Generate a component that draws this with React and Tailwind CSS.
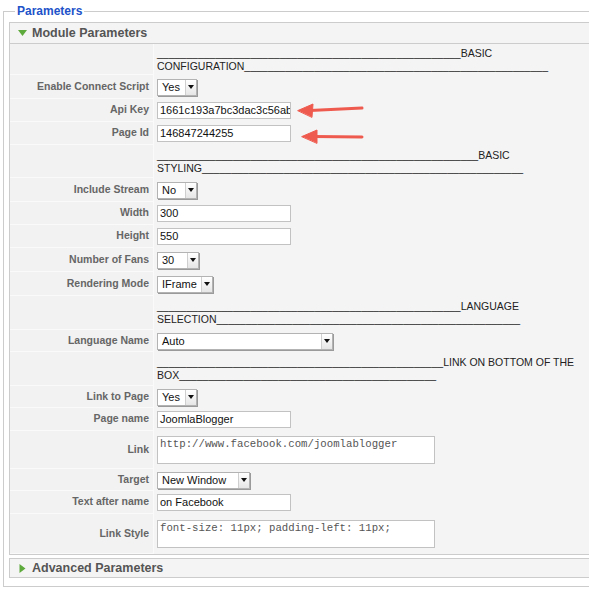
import React from 'react';

const FONT = { fontFamily: '"Liberation Sans", Arial, sans-serif' };

function Select({ value, className }) {
  return (
    <div
      className={`flex h-[17px] items-center border border-[#b3b3b3] bg-white shadow-[1px_1px_0_#9a9a9a] ${className}`}
    >
      <span className="flex-1 pl-[4px] text-[11px] leading-none text-[#111]">{value}</span>
      <span className="flex h-full w-[11px] items-center justify-center border-l border-[#cfcfcf] bg-gradient-to-b from-white to-[#e6e6e6]">
        <svg width="6" height="4" viewBox="0 0 6 4" aria-hidden>
          <path d="M0 0H6L3 4Z" fill="#111" />
        </svg>
      </span>
    </div>
  );
}

function TextInput({ value }) {
  return (
    <div className="flex h-[17px] w-[134px] items-center overflow-hidden whitespace-nowrap border border-[#c2c2c2] bg-white pl-[2px] text-[11px] leading-none text-[#111]">
      {value}
    </div>
  );
}

function TextArea({ value }) {
  return (
    <div
      className="h-[28px] w-[278px] border border-[#c2c2c2] bg-white px-[2px] pt-[1px] text-[10.7px] leading-[13px] text-[#555]"
      style={{ fontFamily: '"Liberation Mono", "Courier New", monospace' }}
    >
      {value}
    </div>
  );
}

// Joomla "spacer" params: a long run of underscores around the section title
function Spacer({ lead, word, second, trail }) {
  return (
    <div className="text-[10.5px] leading-[13px] text-[#222]">
      <div className="whitespace-nowrap">
        {'_'.repeat(lead)}
        {word}
      </div>
      <div className="whitespace-nowrap">
        {second}
        {'_'.repeat(trail)}
      </div>
    </div>
  );
}

const rows = [
  { h: 'h-[31px]', field: <Spacer lead={52} word="BASIC" second="CONFIGURATION" trail={52} /> },
  { h: 'h-[24px]', label: 'Enable Connect Script', field: <Select value="Yes" className="w-[40px]" /> },
  { h: 'h-[23px]', label: 'Api Key', field: <TextInput value="1661c193a7bc3dac3c56ab" /> },
  { h: 'h-[23px]', label: 'Page Id', field: <TextInput value="146847244255" /> },
  { h: 'h-[33px]', field: <Spacer lead={55} word="BASIC" second="STYLING" trail={55} /> },
  { h: 'h-[24px]', label: 'Include Stream', field: <Select value="No" className="w-[40px]" /> },
  { h: 'h-[23px]', label: 'Width', field: <TextInput value="300" /> },
  { h: 'h-[23px]', label: 'Height', field: <TextInput value="550" /> },
  { h: 'h-[24px]', label: 'Number of Fans', field: <Select value="30" className="w-[42px]" /> },
  { h: 'h-[24px]', label: 'Rendering Mode', field: <Select value="IFrame" className="w-[56px]" /> },
  { h: 'h-[34px]', field: <Spacer lead={52} word="LANGUAGE" second="SELECTION" trail={52} /> },
  { h: 'h-[22px]', label: 'Language Name', field: <Select value="Auto" className="w-[176px]" /> },
  { h: 'h-[34px]', field: <Spacer lead={49} word="LINK ON BOTTOM OF THE" second="BOX" trail={44} /> },
  { h: 'h-[22px]', label: 'Link to Page', field: <Select value="Yes" className="w-[40px]" /> },
  { h: 'h-[23px]', label: 'Page name', field: <TextInput value="JoomlaBlogger" /> },
  { h: 'h-[38px]', label: 'Link', field: <TextArea value="http://www.facebook.com/joomlablogger" /> },
  { h: 'h-[22px]', label: 'Target', field: <Select value="New Window" className="w-[93px]" /> },
  { h: 'h-[23px]', label: 'Text after name', field: <TextInput value="on Facebook" /> },
  { h: 'h-[40px]', label: 'Link Style', field: <TextArea value="font-size: 11px; padding-left: 11px;" /> },
];

function PaneTitle({ open, children }) {
  return (
    <div className="flex items-center gap-[5px] pl-[8px] text-[12.5px] font-bold text-[#555]">
      {open ? (
        <svg width="9" height="6" viewBox="0 0 9 6" aria-hidden>
          <path d="M0 0H9L4.5 6Z" fill="#5faa3c" />
        </svg>
      ) : (
        <svg width="9" height="9" viewBox="0 0 9 9" aria-hidden>
          <path d="M1.5 0L7.5 4.5L1.5 9Z" fill="#5faa3c" />
        </svg>
      )}
      {children}
    </div>
  );
}

export default function App() {
  return (
    <div className="relative h-[589px] w-[589px] overflow-hidden bg-white" style={FONT}>
      <div className="pl-[3px] pt-[4px]">
        <fieldset className="w-[640px] border border-[#cccccc] px-[5px] pb-[8px]">
          <legend className="ml-[6px] px-[2px] text-[12px] font-bold leading-[14px] text-[#2152c9]">
            Parameters
          </legend>

          {/* Module Parameters pane */}
          <div className="mt-[4px] border border-[#cccccc] bg-[#f4f4f4]">
            <div className="flex h-[21px] items-center border-b border-[#cccccc]">
              <PaneTitle open>Module Parameters</PaneTitle>
            </div>
            {rows.map((r, i) => (
              <div key={i} className={`flex ${r.h}`}>
                <div className="flex w-[144px] shrink-0 items-center justify-end border-b border-r border-[#fafafa] bg-[#f2f2f2] pr-[4px] text-[10.5px] font-bold text-[#666]">
                  {r.label}
                </div>
                <div className="flex items-center pl-[3px]">{r.field}</div>
              </div>
            ))}
          </div>

          {/* Advanced Parameters pane */}
          <div className="mt-[3px] flex h-[20px] items-center border border-[#cccccc] bg-[#f4f4f4]">
            <PaneTitle>Advanced Parameters</PaneTitle>
          </div>
        </fieldset>
      </div>

      {/* red annotation arrows */}
      <svg className="absolute left-0 top-0" width="589" height="589" aria-hidden>
        <g fill="#ef5a4e" stroke="#ef5a4e" strokeLinecap="round">
          <line x1="362" y1="108" x2="310" y2="110.5" strokeWidth="3" />
          <path d="M298 110.5L313 104L312 117Z" strokeWidth="1" />
          <line x1="362" y1="137" x2="314" y2="136.5" strokeWidth="3" />
          <path d="M302 136.5L317 130L317 143Z" strokeWidth="1" />
        </g>
      </svg>
    </div>
  );
}
